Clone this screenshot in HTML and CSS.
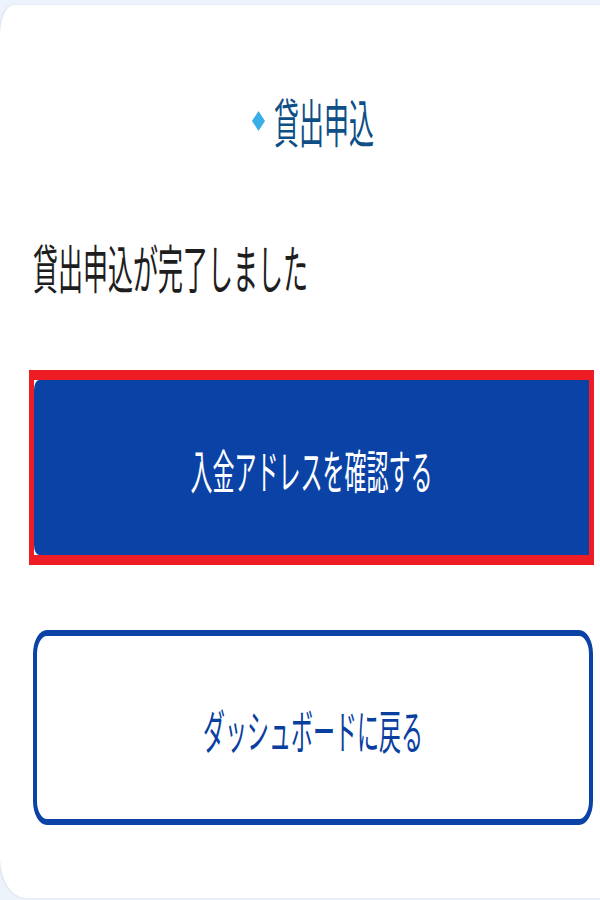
FILE: index.html
```html
<!DOCTYPE html>
<html lang="ja">
<head>
<meta charset="utf-8">
<title>貸出申込</title>
<link rel="stylesheet" href="styles.css">
</head>
<body>
<main class="card">
  <h1 class="title">
    <svg class="diamond" width="13" height="20" viewBox="0 0 13 20" aria-hidden="true"><polygon points="6.5,0 13,10 6.5,20 0,10" fill="#3aaee9"/></svg>
    <span class="stretch">貸出申込</span>
  </h1>
  <p class="message"><span class="stretch">貸出申込が完了しました</span></p>
  <div class="highlight">
    <button class="btn btn-primary" type="button"><span class="stretch">入金アドレスを確認する</span></button>
  </div>
  <button class="btn btn-outline" type="button"><span class="stretch">ダッシュボードに戻る</span></button>
</main>
</body>
</html>
```

FILE: styles.css
```css
html, body {
  margin: 0;
  padding: 0;
}
body {
  background: #edf3fb;
  overflow: hidden;
  width: 600px;
  height: 900px;
  font-family: "Noto Sans CJK JP", "Noto Sans", sans-serif;
}
.card {
  box-sizing: border-box;
  width: 626px;
  height: 893px;
  margin-top: 5px;
  padding: 100px 33px 0;
  background: #ffffff;
  border-radius: 14px 0 0 26px / 30px 0 0 40px;
  box-shadow: -1px 0 2px rgba(150, 170, 200, 0.25);
  display: flex;
  flex-direction: column;
}
.stretch {
  display: inline-block;
  transform: scaleY(2.1);
  transform-origin: 50% 50%;
  white-space: nowrap;
}
.title {
  margin: 0;
  height: 30px;
  display: flex;
  align-items: center;
  justify-content: center;
  gap: 9px;
  font-size: 25px;
  line-height: 30px;
  font-weight: 400;
  color: #0f4f86;
}
.diamond {
  display: block;
  margin-top: 2px;
}
.message {
  margin: 116px 0 0;
  height: 30px;
  font-size: 25px;
  line-height: 30px;
  font-weight: 400;
  color: #1e1e1e;
}
.highlight {
  margin: 89px -1px 0 -4px;
  border-style: solid;
  border-color: #ee1c25;
  border-width: 10px 5px;
  height: 175px;
  background: #ffffff;
}
.btn {
  display: flex;
  align-items: center;
  justify-content: center;
  width: 100%;
  margin: 0;
  padding: 0;
  font-family: inherit;
  font-size: 22px;
  line-height: 30px;
  font-weight: 400;
  cursor: pointer;
}
.btn-primary {
  height: 175px;
  border: none;
  background: #0b42a6;
  color: #ffffff;
  border-radius: 5px 0 0 5px / 10px 0 0 10px;
}
.btn-outline {
  box-sizing: border-box;
  margin-top: 65px;
  height: 195px;
  background: #ffffff;
  color: #0a3f9f;
  border-style: solid;
  border-color: #0b42a6;
  border-width: 6px 4px;
  border-radius: 14px / 24px;
}
```
